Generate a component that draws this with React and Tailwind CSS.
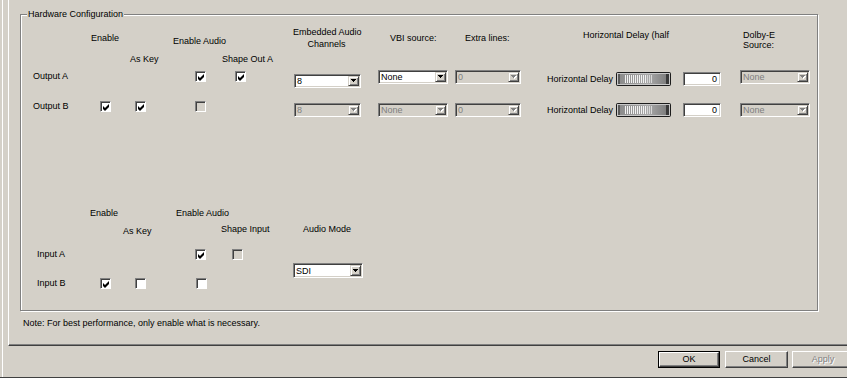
import React from "react";

const F = "font-['Liberation_Sans',Arial,sans-serif]";

function Check({ checked, disabled, className = "" }) {
  return (
    <div
      className={`${className} w-[11px] h-[11px] shrink-0 border border-t-[#808080] border-l-[#808080] border-r-white border-b-white shadow-[inset_1px_1px_0_#404040] ${
        disabled ? "bg-[#d4d0c8]" : "bg-white"
      } flex items-center justify-center pl-[1px] pt-[1px]`}
    >
      {checked && (
        <svg width="7" height="7" viewBox="0 0 7 7">
          <path d="M0 2L2 4L6 0V3L2 7L0 5Z" fill="#000" />
        </svg>
      )}
    </div>
  );
}

function Arrow({ disabled }) {
  return (
    <div className="w-[11px] h-full shrink-0 bg-[#d4d0c8] border border-t-[#d4d0c8] border-l-[#d4d0c8] border-r-[#404040] border-b-[#404040] shadow-[inset_1px_1px_0_#fff,inset_-1px_-1px_0_#808080] flex items-center justify-center">
      <svg width="6" height="4" viewBox="0 0 6 4">
        {disabled && <path d="M1 1h5v1h-1v1h-1v1h-1v-1h-1v-1h-1z" fill="#fff" />}
        <path d="M0 0h5v1h-1v1h-1v1h-1v-1h-1v-1h-1z" fill={disabled ? "#808080" : "#000"} />
      </svg>
    </div>
  );
}

function Combo({ value, disabled, className = "" }) {
  return (
    <div
      className={`${className} shrink-0 flex border border-t-[#808080] border-l-[#808080] border-r-white border-b-white shadow-[inset_1px_1px_0_#404040,inset_-1px_-1px_0_#d4d0c8] p-[1px] ${
        disabled ? "bg-[#d4d0c8] text-[#808080]" : "bg-white text-black"
      }`}
    >
      <div className="flex-1 pl-[1px] flex items-center leading-[10px] whitespace-nowrap overflow-hidden">{value}</div>
      <Arrow disabled={disabled} />
    </div>
  );
}

function TextBox({ value, className = "" }) {
  return (
    <div
      className={`${className} w-[38px] h-[14px] shrink-0 bg-white border border-t-[#808080] border-l-[#808080] border-r-white border-b-white shadow-[inset_1px_1px_0_#404040,inset_-1px_-1px_0_#d4d0c8] flex items-center justify-end pr-[3px] leading-[10px]`}
    >
      {value}
    </div>
  );
}

function Slider() {
  const stripes = [];
  for (let x = 9; x < 36; x += 2) {
    stripes.push(<rect key={x} x={x} y="3" width="1" height="8" fill={x < 30 ? "#f2f2f2" : "#d8d8d8"} />);
  }
  return (
    <svg width="55" height="14" viewBox="0 0 55 14" className="shrink-0">
      <defs>
        <linearGradient id="sg" x1="0" x2="1" y1="0" y2="0">
          <stop offset="0" stopColor="#8a8a8a" />
          <stop offset="0.6" stopColor="#a9a9a9" />
          <stop offset="1" stopColor="#7a7a7a" />
        </linearGradient>
      </defs>
      <rect x="0" y="0" width="55" height="14" rx="2" fill="#1c1c1c" />
      <rect x="1" y="1" width="53" height="12" fill="#c8c8c8" />
      <rect x="2" y="2" width="50" height="10" fill="url(#sg)" />
      {stripes}
      <rect x="50" y="2" width="3" height="10" fill="#3a3a3a" />
      <rect x="2" y="2" width="2" height="10" fill="#5a5a5a" />
    </svg>
  );
}

function Btn({ children, disabled, className = "" }) {
  return (
    <div
      className={`${className} shrink-0 h-[17px] bg-[#d4d0c8] border border-t-white border-l-white border-r-[#404040] border-b-[#404040] shadow-[inset_-1px_-1px_0_#808080] flex items-center justify-center ${
        disabled ? "text-[#808080] [text-shadow:1px_1px_0_#fff]" : "text-black"
      }`}
    >
      {children}
    </div>
  );
}

export default function App() {
  return (
    <div className={`${F} text-[9px] leading-[11px] text-black w-[861px] h-[378px] flex bg-white overflow-hidden`}>
      <div className="w-[847px] h-[378px] shrink-0 bg-[#d4d0c8] pl-[2px] border-b border-[#404040] overflow-hidden">
        <div className="h-full border-l border-white flex flex-col">
          {/* tab panel */}
          <div className="ml-[5px] w-[839px] h-[346px] shrink-0 border-l border-white border-b border-b-[#404040] shadow-[inset_0_-1px_0_#808080] flex flex-col">
            {/* group box */}
            <div className="relative ml-[11px] mt-[14px] w-[798px] h-[297px] shrink-0 border border-[#808080] shadow-[inset_1px_1px_0_#fff,1px_1px_0_#fff]">
              <div className="absolute left-[6px] top-[-6px] px-[1px] bg-[#d4d0c8] whitespace-nowrap">Hardware Configuration</div>

              {/* Outputs */}
              <div className="flex items-start h-[175px]">
                <div className="w-[67px] shrink-0 flex flex-col">
                  <div className="ml-[12px] mt-[56px] whitespace-nowrap">Output A</div>
                  <div className="ml-[12px] mt-[19px] whitespace-nowrap">Output B</div>
                </div>
                <div className="w-[37px] shrink-0 flex flex-col">
                  <div className="ml-[3px] mt-[18px] whitespace-nowrap">Enable</div>
                  <Check checked className="ml-[12px] mt-[57px]" />
                </div>
                <div className="w-[45px] shrink-0 flex flex-col">
                  <div className="ml-[5px] mt-[39px] whitespace-nowrap">As Key</div>
                  <Check checked className="ml-[10px] mt-[36px]" />
                </div>
                <div className="w-[50px] shrink-0 flex flex-col">
                  <div className="ml-[3px] mt-[21px] whitespace-nowrap">Enable Audio</div>
                  <Check checked className="ml-[25px] mt-[24px]" />
                  <Check disabled className="ml-[25px] mt-[19px]" />
                </div>
                <div className="w-[65px] shrink-0 flex flex-col">
                  <div className="ml-[2px] mt-[39px] whitespace-nowrap">Shape Out A</div>
                  <Check checked className="ml-[15px] mt-[6px]" />
                </div>
                <div className="w-[85px] shrink-0 flex flex-col">
                  <div className="ml-[8px] mt-[11px] w-[67px] text-center leading-[12px] whitespace-nowrap">
                    Embedded Audio
                    <br />
                    Channels
                  </div>
                  <Combo value="8" className="ml-[9px] mt-[24px] w-[67px] h-[14px]" />
                  <Combo value="8" disabled className="ml-[9px] mt-[15px] w-[67px] h-[14px]" />
                </div>
                <div className="w-[81px] shrink-0 flex flex-col">
                  <div className="ml-[20px] mt-[18px] whitespace-nowrap">VBI source:</div>
                  <Combo value="None" className="ml-[8px] mt-[26px] w-[70px] h-[14px]" />
                  <Combo value="None" disabled className="ml-[8px] mt-[19px] w-[70px] h-[14px]" />
                </div>
                <div className="w-[79px] shrink-0 flex flex-col">
                  <div className="ml-[14px] mt-[18px] whitespace-nowrap">Extra lines:</div>
                  <Combo value="0" disabled className="ml-[4px] mt-[26px] w-[66px] h-[14px]" />
                  <Combo value="0" disabled className="ml-[4px] mt-[19px] w-[66px] h-[14px]" />
                </div>
                <div className="w-[200px] shrink-0 flex flex-col">
                  <div className="ml-[53px] mt-[15px] whitespace-nowrap">Horizontal Delay (half</div>
                  <div className="ml-[17px] mt-[31px] h-[14px] flex items-center">
                    <div className="w-[69px] shrink-0 whitespace-nowrap">Horizontal Delay</div>
                    <Slider />
                    <TextBox value="0" className="ml-[12px]" />
                  </div>
                  <div className="ml-[17px] mt-[17px] h-[14px] flex items-center">
                    <div className="w-[69px] shrink-0 whitespace-nowrap">Horizontal Delay</div>
                    <Slider />
                    <TextBox value="0" className="ml-[12px]" />
                  </div>
                </div>
                <div className="w-[88px] shrink-0 flex flex-col">
                  <div className="ml-[13px] mt-[15px] leading-[10px] whitespace-nowrap">
                    Dolby-E
                    <br />
                    Source:
                  </div>
                  <Combo value="None" disabled className="ml-[10px] mt-[20px] w-[70px] h-[14px]" />
                  <Combo value="None" disabled className="ml-[10px] mt-[19px] w-[70px] h-[14px]" />
                </div>
              </div>

              {/* Inputs */}
              <div className="flex items-start">
                <div className="w-[67px] shrink-0 flex flex-col">
                  <div className="ml-[16px] mt-[59px] whitespace-nowrap">Input A</div>
                  <div className="ml-[16px] mt-[18px] whitespace-nowrap">Input B</div>
                </div>
                <div className="w-[33px] shrink-0 flex flex-col">
                  <div className="ml-[2px] mt-[18px] whitespace-nowrap">Enable</div>
                  <Check checked className="ml-[12px] mt-[59px]" />
                </div>
                <div className="w-[49px] shrink-0 flex flex-col">
                  <div className="ml-[2px] mt-[36px] whitespace-nowrap">As Key</div>
                  <Check className="ml-[14px] mt-[41px]" />
                </div>
                <div className="w-[50px] shrink-0 flex flex-col">
                  <div className="ml-[6px] mt-[18px] whitespace-nowrap">Enable Audio</div>
                  <Check checked className="ml-[25px] mt-[30px]" />
                  <Check className="ml-[26px] mt-[18px]" />
                </div>
                <div className="w-[65px] shrink-0 flex flex-col">
                  <div className="ml-[1px] mt-[34px] whitespace-nowrap">Shape Input</div>
                  <Check disabled className="ml-[12px] mt-[14px]" />
                </div>
                <div className="w-[85px] shrink-0 flex flex-col">
                  <div className="ml-[18px] mt-[34px] whitespace-nowrap">Audio Mode</div>
                  <Combo value="SDI" className="ml-[8px] mt-[28px] w-[70px] h-[15px]" />
                </div>
              </div>
            </div>
            <div className="ml-[14px] mt-[7px] whitespace-nowrap">Note: For best performance, only enable what is necessary.</div>
          </div>

          {/* buttons */}
          <div className="flex mt-[5px] h-[17px]">
            <div className="ml-[655px] w-[62px] h-[17px] shrink-0 border border-black flex">
              <div className="flex-1 bg-[#d4d0c8] border border-t-white border-l-white border-r-[#404040] border-b-[#404040] shadow-[inset_-1px_-1px_0_#808080] flex items-center justify-center">
                OK
              </div>
            </div>
            <Btn className="ml-[5px] w-[63px]">Cancel</Btn>
            <Btn disabled className="ml-[4px] w-[62px]">
              Apply
            </Btn>
          </div>
        </div>
      </div>
      <div className="flex-1 bg-white" />
    </div>
  );
}
